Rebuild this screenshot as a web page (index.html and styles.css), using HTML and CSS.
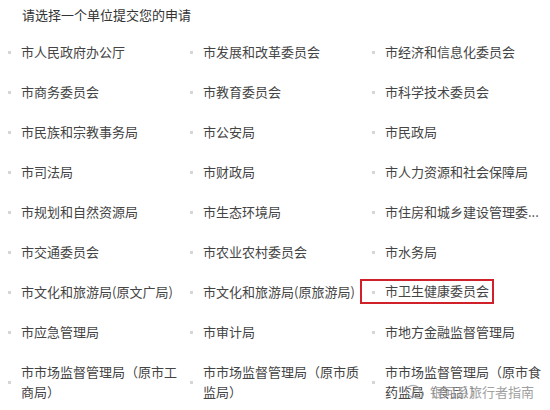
FILE: index.html
```html
<!DOCTYPE html>
<html lang="zh">
<head>
<meta charset="utf-8">
<link rel="stylesheet" href="styles.css">
</head>
<body>
<div class="page">
  <h1 class="title">请选择一个单位提交您的申请</h1>
  <ul class="units">
    <li class="unit">市人民政府办公厅</li>
    <li class="unit">市发展和改革委员会</li>
    <li class="unit">市经济和信息化委员会</li>
    <li class="unit">市商务委员会</li>
    <li class="unit">市教育委员会</li>
    <li class="unit">市科学技术委员会</li>
    <li class="unit">市民族和宗教事务局</li>
    <li class="unit">市公安局</li>
    <li class="unit">市民政局</li>
    <li class="unit">市司法局</li>
    <li class="unit">市财政局</li>
    <li class="unit">市人力资源和社会保障局</li>
    <li class="unit">市规划和自然资源局</li>
    <li class="unit">市生态环境局</li>
    <li class="unit unit-clip">市住房和城乡建设管理委...</li>
    <li class="unit">市交通委员会</li>
    <li class="unit">市农业农村委员会</li>
    <li class="unit">市水务局</li>
    <li class="unit">市文化和旅游局(原文广局)</li>
    <li class="unit">市文化和旅游局(原旅游局)</li>
    <li class="unit unit-marked">市卫生健康委员会</li>
    <li class="unit">市应急管理局</li>
    <li class="unit">市审计局</li>
    <li class="unit">市地方金融监督管理局</li>
    <li class="unit">市市场监督管理局（原市工商局）</li>
    <li class="unit">市市场监督管理局（原市质监局）</li>
    <li class="unit">市市场监督管理局（原市食药监局（食品））</li>
  </ul>
  <div class="watermark">
    <svg class="wm-icon" width="20" height="16" viewBox="0 0 20 16">
      <ellipse cx="8" cy="7" rx="7" ry="5.6" fill="none" stroke="#9a9a9a" stroke-width="1.2"/>
      <ellipse cx="13" cy="10" rx="5.5" ry="4.4" fill="none" stroke="#9a9a9a" stroke-width="1.2"/>
      <circle cx="5.5" cy="5.5" r="0.9" fill="#9a9a9a"/>
      <circle cx="10" cy="5.5" r="0.9" fill="#9a9a9a"/>
    </svg>
    <span class="wm-text">银河系旅行者指南</span>
  </div>
</div>
</body>
</html>
```
FILE: styles.css
```css
* { box-sizing: border-box; }
html, body {
  margin: 0;
  padding: 0;
  background: #ffffff;
}
body {
  font-family: "Noto Sans CJK SC", "Noto Sans", sans-serif;
  width: 550px;
  height: 410px;
  overflow: hidden;
}
.page {
  position: relative;
  width: 550px;
  height: 410px;
}
.title {
  margin: 0;
  padding: 5px 0 0 22px;
  font-size: 13px;
  line-height: 20px;
  font-weight: normal;
  color: #333333;
}
.units {
  list-style: none;
  margin: 0;
  padding: 17px 0 0 0;
  display: grid;
  grid-template-columns: 182px 182px 182px;
  row-gap: 20px;
}
.unit {
  position: relative;
  width: 182px;
  padding: 0 4px 0 21px;
  font-size: 13px;
  line-height: 20px;
  color: #444444;
  display: flex;
  align-items: center;
  min-height: 20px;
}
.unit::before {
  content: "";
  position: absolute;
  left: 8px;
  top: 50%;
  width: 3px;
  height: 3px;
  margin-top: -1px;
  background: #d6d6d6;
}
.unit-clip {
  white-space: nowrap;
  padding-right: 0;
}
.unit-marked {
  width: 134px;
  margin: -3px 0 -2px -4px;
  padding: 0 0 1px 23px;
  border: 2px solid #d0202a;
}
.unit-marked::before {
  left: 10px;
}
.watermark {
  position: absolute;
  left: 405px;
  top: 383px;
  display: flex;
  align-items: center;
  gap: 5px;
  opacity: 0.8;
}
.wm-text {
  font-size: 13px;
  line-height: 18px;
  color: #8a8a8a;
  text-shadow: 0 0 2px #ffffff, 0 0 2px #ffffff;
}
```
